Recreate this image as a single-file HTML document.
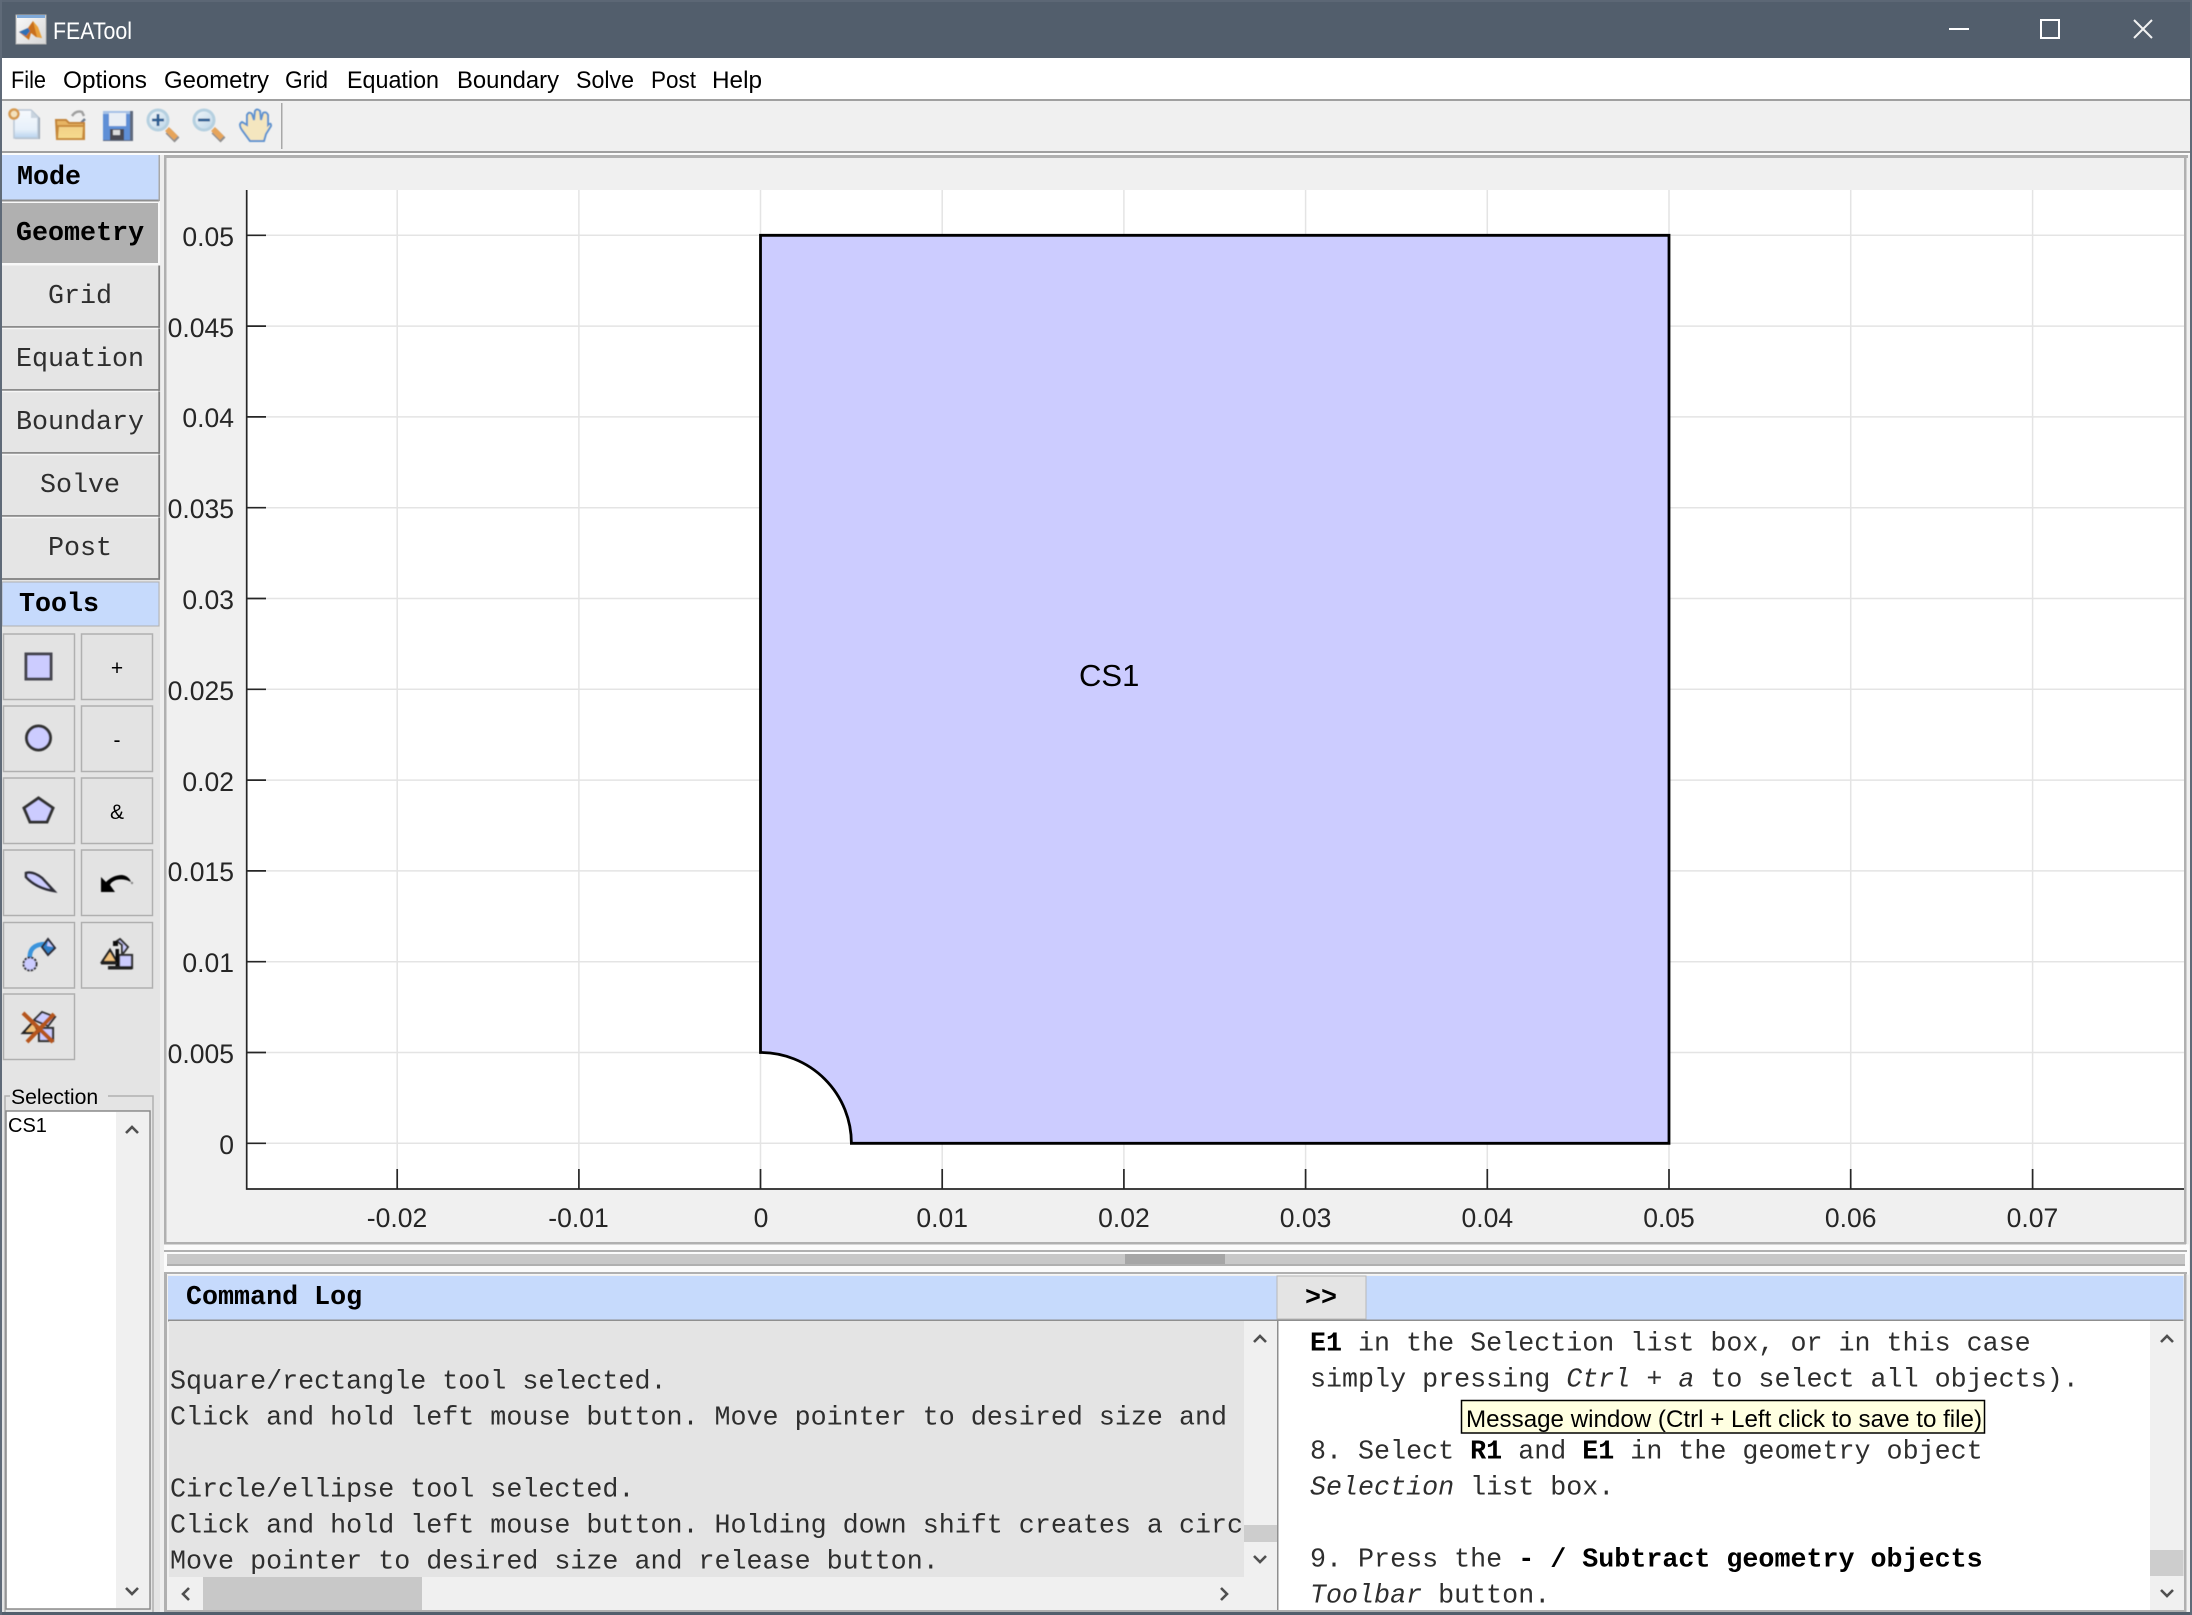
<!DOCTYPE html>
<html>
<head>
<meta charset="utf-8">
<title>FEATool</title>
<style>
html,body{margin:0;padding:0;background:#f0f0f0;}
svg{display:block;}
text{white-space:pre;}
.s{font-family:"Liberation Sans",sans-serif;}
.m{font-family:"Liberation Mono",monospace;font-size:26.7px;fill:#2e2e2e;}
.mb{font-family:"Liberation Mono",monospace;font-size:26.7px;font-weight:bold;fill:#000;}
.menu{font-family:"Liberation Sans",sans-serif;font-size:24px;fill:#000;}
.yl{font-family:"Liberation Sans",sans-serif;font-size:26.5px;fill:#262626;text-anchor:end;}
.xl{font-family:"Liberation Sans",sans-serif;font-size:26.5px;fill:#262626;text-anchor:middle;}
.btn{fill:#e3e3e3;stroke:#b0b0b0;stroke-width:1.5;}
.mode{fill:#e5e5e5;}
.arr{fill:none;stroke:#505050;stroke-width:2.6;}
.b{font-weight:bold;fill:#000;}
.i{font-style:italic;}
</style>
</head>
<body>
<svg xmlns="http://www.w3.org/2000/svg" width="2192" height="1615" viewBox="0 0 2192 1615">
<defs>
<clipPath id="logclip"><rect x="169" y="1321" width="1075" height="256"/></clipPath>
<filter id="bl" x="-20%" y="-20%" width="140%" height="140%"><feGaussianBlur stdDeviation="0.5"/></filter>
<linearGradient id="pg" x1="0" y1="0" x2="0" y2="1"><stop offset="0" stop-color="#f6f9fd"/><stop offset="0.7" stop-color="#e6f0fa"/><stop offset="1" stop-color="#b7d2ee"/></linearGradient>
<linearGradient id="fo" x1="0" y1="0" x2="0" y2="1"><stop offset="0" stop-color="#f2cf86"/><stop offset="1" stop-color="#f6dc8e"/></linearGradient>
<linearGradient id="lens" x1="0" y1="0" x2="1" y2="1"><stop offset="0" stop-color="#f2f6f9"/><stop offset="1" stop-color="#bcd6e8"/></linearGradient>
<linearGradient id="ti" x1="0" y1="0" x2="1" y2="1"><stop offset="0" stop-color="#fafafa"/><stop offset="1" stop-color="#d6d6d6"/></linearGradient>
</defs>
<!-- window -->
<rect width="2192" height="1615" fill="#f0f0f0"/>
<rect width="2192" height="58" fill="#525e6c"/>
<rect width="2192" height="2" fill="#5c6775"/>
<!-- title icon -->
<rect x="16" y="15" width="30" height="29" fill="url(#ti)" stroke="#b5b5b5"/>
<rect x="17" y="15" width="28" height="3" fill="#7fa9d8"/>
<g filter="url(#bl)">
<polygon points="19,32 28,28 33,21 42,38 36,37 31,33 29,40" fill="#c9701f"/>
<polygon points="19,32 28,28 30,31 26,36" fill="#2f6fb5"/>
<polygon points="33,21 38,27 42,38 37,37" fill="#e9a13a"/>
</g>
<text x="53" y="39" class="s" font-size="24" fill="#fff" textLength="79" lengthAdjust="spacingAndGlyphs">FEATool</text>
<!-- window buttons -->
<rect x="1949" y="28" width="20" height="2" fill="#fff"/>
<rect x="2041" y="20" width="18" height="18" fill="none" stroke="#fff" stroke-width="2"/>
<path d="M2134 20L2152 38M2152 20L2134 38" stroke="#f2f2f2" stroke-width="2" fill="none"/>
<!-- menu -->
<rect y="58" width="2192" height="41" fill="#fff"/>
<rect y="99" width="2192" height="2" fill="#a0a0a0"/>
<text class="menu" x="11" y="88" textLength="35" lengthAdjust="spacingAndGlyphs">File</text>
<text class="menu" x="63" y="88" textLength="84" lengthAdjust="spacingAndGlyphs">Options</text>
<text class="menu" x="164" y="88" textLength="105" lengthAdjust="spacingAndGlyphs">Geometry</text>
<text class="menu" x="285" y="88" textLength="43" lengthAdjust="spacingAndGlyphs">Grid</text>
<text class="menu" x="347" y="88" textLength="92" lengthAdjust="spacingAndGlyphs">Equation</text>
<text class="menu" x="457" y="88" textLength="102" lengthAdjust="spacingAndGlyphs">Boundary</text>
<text class="menu" x="576" y="88" textLength="58" lengthAdjust="spacingAndGlyphs">Solve</text>
<text class="menu" x="651" y="88" textLength="45" lengthAdjust="spacingAndGlyphs">Post</text>
<text class="menu" x="712" y="88" textLength="50" lengthAdjust="spacingAndGlyphs">Help</text>
<!-- toolbar -->
<rect y="151" width="2192" height="2" fill="#a0a0a0"/>
<rect y="153" width="2192" height="2" fill="#fbfbfb"/>
<rect x="281" y="103" width="1.5" height="46" fill="#a8a8a8"/>
<g filter="url(#bl)">
<!-- new -->
<path d="M16 110H32L40 118V139H15Z" fill="#9aa5b2"/>
<path d="M14 110H31L38 117V138H14Z" fill="url(#pg)" stroke="#b9c7d6" stroke-width="1.5"/>
<path d="M31 110V118H38Z" fill="#c9d4df"/>
<circle cx="14" cy="114" r="4.5" fill="#f3e1bd" stroke="#d69a50" stroke-width="2.5"/>
<!-- open -->
<path d="M72 116Q76 110 82 112L84 116" fill="none" stroke="#a0a0a0" stroke-width="2.5"/>
<path d="M85 119L80 124" stroke="#6d7c8c" stroke-width="2.5" fill="none"/>
<path d="M56 120H66L69 123H84V139H57Z" fill="#e7b463" stroke="#c2843a" stroke-width="2"/>
<path d="M58 126H84L83 139H57Z" fill="url(#fo)" stroke="#c88a3a" stroke-width="2"/>
<!-- save -->
<rect x="103" y="111" width="30" height="30" fill="#5f6a7e"/>
<rect x="103" y="111" width="27" height="29" fill="#5e8fd6"/>
<rect x="103" y="111" width="27" height="3" fill="#a4c0e6"/>
<rect x="109" y="113" width="17" height="13" fill="#e9eef5"/>
<rect x="110" y="129" width="14" height="11" fill="#4a4a52"/>
<rect x="113" y="130" width="7" height="5" fill="#dcdcdc"/>
<!-- zoom in -->
<path d="M168 131L177 140" stroke="#8f8f8f" stroke-width="7" fill="none"/>
<path d="M167 129L176 138" stroke="#e6a45a" stroke-width="5.5" fill="none"/>
<circle cx="158" cy="120" r="10" fill="url(#lens)" stroke="#b5d0e0" stroke-width="3"/>
<path d="M152 120H164M158 114V126" stroke="#2e5e93" stroke-width="2.8" fill="none"/>
<!-- zoom out -->
<path d="M214 131L223 140" stroke="#8f8f8f" stroke-width="7" fill="none"/>
<path d="M213 129L222 138" stroke="#e6a45a" stroke-width="5.5" fill="none"/>
<circle cx="204" cy="120" r="10" fill="url(#lens)" stroke="#b5d0e0" stroke-width="3"/>
<path d="M198 120H210" stroke="#2e5e93" stroke-width="2.8" fill="none"/>
<!-- hand -->
<path d="M250 141L242 130Q238 124 242 122L247 125L247 115Q249 111 252 114L254 120L255 111Q257 108 260 111L261 120L263 113Q266 111 268 115L268 125Q271 122 271 126L266 134L264 141Z" fill="#f4e6bf" stroke="#5f93cf" stroke-width="2"/>
</g>

<!-- left panel -->
<rect x="2" y="155" width="158" height="1457" fill="#e4e4e4"/>
<rect x="160" y="155" width="4" height="1457" fill="#eeeeee"/>
<rect x="2" y="155" width="157" height="45" fill="#c6dafc"/>
<rect x="2" y="199.5" width="157" height="2" fill="#8f8f8f"/>
<rect x="158.5" y="155" width="1.5" height="46" fill="#a8a8a8"/>
<text class="mb" x="17" y="184">Mode</text>
<rect x="2" y="201.5" width="158" height="64" fill="#f8f8f8"/>
<rect x="2" y="203" width="156" height="60" fill="#b0b0b0"/>
<text class="mb" x="16" y="240">Geometry</text>
<g>
<rect class="mode" x="2" y="265.5" width="157" height="60.5"/>
<rect class="mode" x="2" y="329" width="157" height="60"/>
<rect class="mode" x="2" y="392" width="157" height="60"/>
<rect class="mode" x="2" y="455" width="157" height="60"/>
<rect class="mode" x="2" y="518" width="157" height="60"/>
<path d="M2 327H159.2V265.5M2 390H159.2V328.5M2 453H159.2V391.5M2 516H159.2V454.5M2 579H159.2V517.5" fill="none" stroke="#7f7f7f" stroke-width="1.8"/>
<path d="M2 328.5H158M2 391.5H158M2 454.5H158M2 517.5H158" stroke="#f6f6f6" stroke-width="1.5" fill="none"/>
</g>
<text class="m" x="80" y="303" text-anchor="middle">Grid</text>
<text class="m" x="80" y="366" text-anchor="middle">Equation</text>
<text class="m" x="80" y="429" text-anchor="middle">Boundary</text>
<text class="m" x="80" y="492" text-anchor="middle">Solve</text>
<text class="m" x="80" y="555" text-anchor="middle">Post</text>
<rect x="2" y="582" width="157" height="44" fill="#c6dafc" stroke="#b0b0b0" stroke-width="1"/>
<text class="mb" x="19" y="611">Tools</text>

<!-- tool buttons -->
<rect class="btn" x="3.5" y="634" width="71" height="65.5"/>
<rect class="btn" x="81.5" y="634" width="71" height="65.5"/>
<rect class="btn" x="3.5" y="706" width="71" height="65.5"/>
<rect class="btn" x="81.5" y="706" width="71" height="65.5"/>
<rect class="btn" x="3.5" y="778" width="71" height="65.5"/>
<rect class="btn" x="81.5" y="778" width="71" height="65.5"/>
<rect class="btn" x="3.5" y="850" width="71" height="65.5"/>
<rect class="btn" x="81.5" y="850" width="71" height="65.5"/>
<rect class="btn" x="3.5" y="922.5" width="71" height="65.5"/>
<rect class="btn" x="81.5" y="922.5" width="71" height="65.5"/>
<rect class="btn" x="3.5" y="994" width="71" height="65.5"/>
<text class="s" x="117" y="675" font-size="21" text-anchor="middle" fill="#000">+</text>
<text class="s" x="117" y="747" font-size="21" text-anchor="middle" fill="#000">-</text>
<text class="s" x="117" y="819" font-size="21" text-anchor="middle" fill="#000">&amp;</text>
<g filter="url(#bl)">
<!-- rect -->
<rect x="26" y="654" width="25" height="25" fill="#ccccff" stroke="#44444f" stroke-width="3"/>
<!-- circle -->
<circle cx="38.5" cy="738" r="12" fill="#ccccff" stroke="#333" stroke-width="3"/>
<!-- pentagon -->
<polygon points="38.5,798 53,808 47,822 30,822 24,808" fill="#ccccff" stroke="#333" stroke-width="3"/>
<!-- wing -->
<path d="M26 873Q33 871 42 878L54 891Q36 888 26 877Z" fill="#ccccff" stroke="#2d2d38" stroke-width="2.6"/>
<!-- undo -->
<path d="M101 877L106 882Q113 875 122 875Q129 876 131 882Q124 878 116 880Q111 882 110 885L115 892H101Z" fill="#000"/>
<circle cx="132" cy="883" r="1.2" fill="#888"/>
<!-- arc tool -->
<path d="M30 960Q28 944 46 944" fill="none" stroke="#3a94dc" stroke-width="4.5"/>
<ellipse cx="30" cy="964" rx="6.5" ry="6.5" fill="#ccccff" stroke="#333" stroke-width="2" stroke-dasharray="2.5 1"/>
<polygon points="48,939 55,948 48,955 42,947" fill="#2f7fc8" stroke="#2d2d38" stroke-width="2"/>
<polygon points="48,941 53,947 47,946" fill="#ccccff"/>
<!-- combine tool -->
<polygon points="102,962 110,950 117,962" fill="#f2c27d" stroke="#222" stroke-width="2.2"/>
<polygon points="120,939 128,947 122,955 122,945 117,941" fill="#ccccff" stroke="#333" stroke-width="2"/>
<rect x="119" y="955" width="13" height="13" fill="#ccccff" stroke="#333" stroke-width="2.2"/>
<rect x="113" y="941" width="5" height="5" fill="#111"/>
<rect x="115.5" y="949" width="3.5" height="18" fill="#111"/>
<rect x="108" y="966" width="24" height="3.5" fill="#222"/>
<rect x="101" y="962" width="16" height="2.5" fill="#222"/>
<!-- delete tool -->
<polygon points="23,1033 33,1022 39,1033" fill="#f2c27d" stroke="#222" stroke-width="2.2"/>
<polygon points="34,1020 42,1012 55,1017 48,1026" fill="#ccccff" stroke="#333" stroke-width="2"/>
<rect x="39" y="1028" width="14" height="13" fill="#ccccff" stroke="#333" stroke-width="2.2"/>
<path d="M23 1013L53 1042M54 1014L27 1042" stroke="#b5551a" stroke-width="4" fill="none"/>
</g>

<!-- selection -->
<path d="M10 1096H5V1612M108 1096H153V1612" fill="none" stroke="#b0b0b0" stroke-width="1.5"/>
<text class="s" x="11" y="1104" font-size="21.2" fill="#000">Selection</text>
<rect x="6" y="1111" width="144" height="498" fill="#fff" stroke="#8a8a8a" stroke-width="1.5"/>
<rect x="116" y="1112" width="33" height="496" fill="#f0f0f0"/>
<text class="s" x="8" y="1132" font-size="20" fill="#000">CS1</text>
<path class="arr" d="M126 1133L132 1127L138 1133"/>
<path class="arr" d="M126 1588L132 1594L138 1588"/>

<!-- axes panel -->
<rect x="164" y="155" width="2024" height="3" fill="#b0b0b0"/>
<rect x="164" y="155" width="2.5" height="1090" fill="#b0b0b0"/>
<rect x="2184" y="158" width="2.5" height="1086" fill="#b0b0b0"/>
<rect x="164" y="1242" width="2022" height="2.5" fill="#b0b0b0"/>
<rect x="246.5" y="190" width="1937.5" height="999" fill="#fff"/>
<!-- grid -->
<g stroke="#e4e4e4" stroke-width="1.5" fill="none">
<path d="M397.2 190V1189M578.9 190V1189M760.5 190V1189M942.2 190V1189M1123.9 190V1189M1305.6 190V1189M1487.3 190V1189M1669 190V1189M1850.7 190V1189M2032.6 190V1189"/>
<path d="M247 235.3H2184M247 326.1H2184M247 416.9H2184M247 507.7H2184M247 598.5H2184M247 689.3H2184M247 780.1H2184M247 870.9H2184M247 961.7H2184M247 1052.5H2184M247 1143.3H2184"/>
</g>
<!-- geometry -->
<path d="M760.5 235.3H1669V1143.3H851.4A90.9 90.8 0 0 0 760.5 1052.5Z" fill="#ccccff" stroke="#000" stroke-width="2.8"/>
<text class="s" x="1079" y="686" font-size="31" fill="#000">CS1</text>
<!-- axes -->
<g stroke="#262626" stroke-width="1.7" fill="none">
<path d="M246.7 190V1189H2184"/>
<path d="M247 235.3H266M247 326.1H266M247 416.9H266M247 507.7H266M247 598.5H266M247 689.3H266M247 780.1H266M247 870.9H266M247 961.7H266M247 1052.5H266M247 1143.3H266"/>
<path d="M397.2 1189V1169M578.9 1189V1169M760.5 1189V1169M942.2 1189V1169M1123.9 1189V1169M1305.6 1189V1169M1487.3 1189V1169M1669 1189V1169M1850.7 1189V1169M2032.6 1189V1169"/>
</g>
<text class="yl" x="234" y="246">0.05</text>
<text class="yl" x="234" y="337">0.045</text>
<text class="yl" x="234" y="427">0.04</text>
<text class="yl" x="234" y="518">0.035</text>
<text class="yl" x="234" y="609">0.03</text>
<text class="yl" x="234" y="700">0.025</text>
<text class="yl" x="234" y="791">0.02</text>
<text class="yl" x="234" y="881">0.015</text>
<text class="yl" x="234" y="972">0.01</text>
<text class="yl" x="234" y="1063">0.005</text>
<text class="yl" x="234" y="1154">0</text>
<text class="xl" x="397" y="1227">-0.02</text>
<text class="xl" x="578.5" y="1227">-0.01</text>
<text class="xl" x="761" y="1227">0</text>
<text class="xl" x="942.2" y="1227">0.01</text>
<text class="xl" x="1123.9" y="1227">0.02</text>
<text class="xl" x="1305.6" y="1227">0.03</text>
<text class="xl" x="1487.3" y="1227">0.04</text>
<text class="xl" x="1669" y="1227">0.05</text>
<text class="xl" x="1850.7" y="1227">0.06</text>
<text class="xl" x="2032.4" y="1227">0.07</text>

<!-- splitter -->
<rect x="164" y="1244.5" width="2025" height="30" fill="#fbfbfb"/>
<rect x="164" y="1250" width="2023" height="2" fill="#b0b0b0"/>
<rect x="167" y="1254" width="2018" height="11" fill="#c8c8c8"/>
<rect x="167" y="1264" width="2018" height="2" fill="#b0b0b0"/>
<rect x="1125" y="1254" width="100" height="10" fill="#a6a6a6"/>
<rect x="164" y="1272" width="2023" height="2" fill="#b0b0b0"/>

<!-- bottom panel -->
<rect x="164" y="1274" width="3" height="338" fill="#b0b0b0"/>
<rect x="2184" y="1274" width="2.5" height="338" fill="#b0b0b0"/>
<rect x="168" y="1276" width="2015.5" height="43.5" fill="#c6dafc"/>
<rect x="168" y="1319.5" width="2015.5" height="2" fill="#8f8f8f"/>
<text class="mb" x="186" y="1304">Command Log</text>
<rect x="1277" y="1276" width="89" height="43" fill="#e4e4e4" stroke="#b8b8b8" stroke-width="1"/>
<text class="mb" x="1305" y="1305">&gt;&gt;</text>
<!-- log -->
<rect x="169" y="1321" width="1075" height="256" fill="#e4e4e4"/>
<g clip-path="url(#logclip)">
<text class="m" x="170" y="1388.5">Square/rectangle tool selected.</text>
<text class="m" x="170" y="1424.5">Click and hold left mouse button. Move pointer to desired size and</text>
<text class="m" x="170" y="1496.5">Circle/ellipse tool selected.</text>
<text class="m" x="170" y="1532.5">Click and hold left mouse button. Holding down shift creates a circle</text>
<text class="m" x="170" y="1568.5">Move pointer to desired size and release button.</text>
</g>
<rect x="1244" y="1321" width="33" height="289" fill="#f0f0f0"/>
<rect x="1244" y="1525" width="33" height="17" fill="#cdcdcd"/>
<path class="arr" d="M1254 1342L1260 1336L1266 1342"/>
<path class="arr" d="M1254 1556L1260 1562L1266 1556"/>
<rect x="169" y="1577" width="1108" height="33" fill="#f0f0f0"/>
<rect x="203" y="1577" width="219" height="33" fill="#c8c8c8"/>
<path class="arr" d="M189 1588L183 1594L189 1600"/>
<path class="arr" d="M1221 1588L1227 1594L1221 1600"/>
<rect x="1277" y="1321" width="1.5" height="290" fill="#8f8f8f"/>
<!-- message pane -->
<rect x="1278.5" y="1321" width="872" height="290" fill="#fff"/>
<text class="m" x="1310" y="1350.5"><tspan class="b">E1</tspan> in the Selection list box, or in this case</text>
<text class="m" x="1310" y="1386.5">simply pressing <tspan class="i">Ctrl + a</tspan> to select all objects).</text>
<text class="m" x="1310" y="1458.5">8. Select <tspan class="b">R1</tspan> and <tspan class="b">E1</tspan> in the geometry object</text>
<text class="m" x="1310" y="1494.5"><tspan class="i">Selection</tspan> list box.</text>
<text class="m" x="1310" y="1566.5">9. Press the <tspan class="b">- / Subtract geometry objects</tspan></text>
<text class="m" x="1310" y="1602.5"><tspan class="i">Toolbar</tspan> button.</text>
<rect x="2150" y="1321" width="33.5" height="290" fill="#f0f0f0"/>
<rect x="2150" y="1550" width="33.5" height="26" fill="#cdcdcd"/>
<path class="arr" d="M2161 1342L2167 1336L2173 1342"/>
<path class="arr" d="M2161 1590L2167 1596L2173 1590"/>
<!-- tooltip -->
<rect x="1461.5" y="1400.5" width="523" height="32.5" fill="#ffffe1" stroke="#000" stroke-width="1.5"/>
<text class="s" x="1466" y="1427" font-size="24" fill="#000" textLength="516" lengthAdjust="spacingAndGlyphs">Message window (Ctrl + Left click to save to file)</text>

<!-- bottom edges -->
<rect x="164" y="1610" width="2022" height="2" fill="#b0b0b0"/>
<rect y="1612" width="2192" height="3" fill="#525e6c"/>
<rect x="0" width="2" height="1615" fill="#5f6a78"/>
<rect x="2190" width="2" height="1615" fill="#5f6a78"/>
</svg>
</body>
</html>
